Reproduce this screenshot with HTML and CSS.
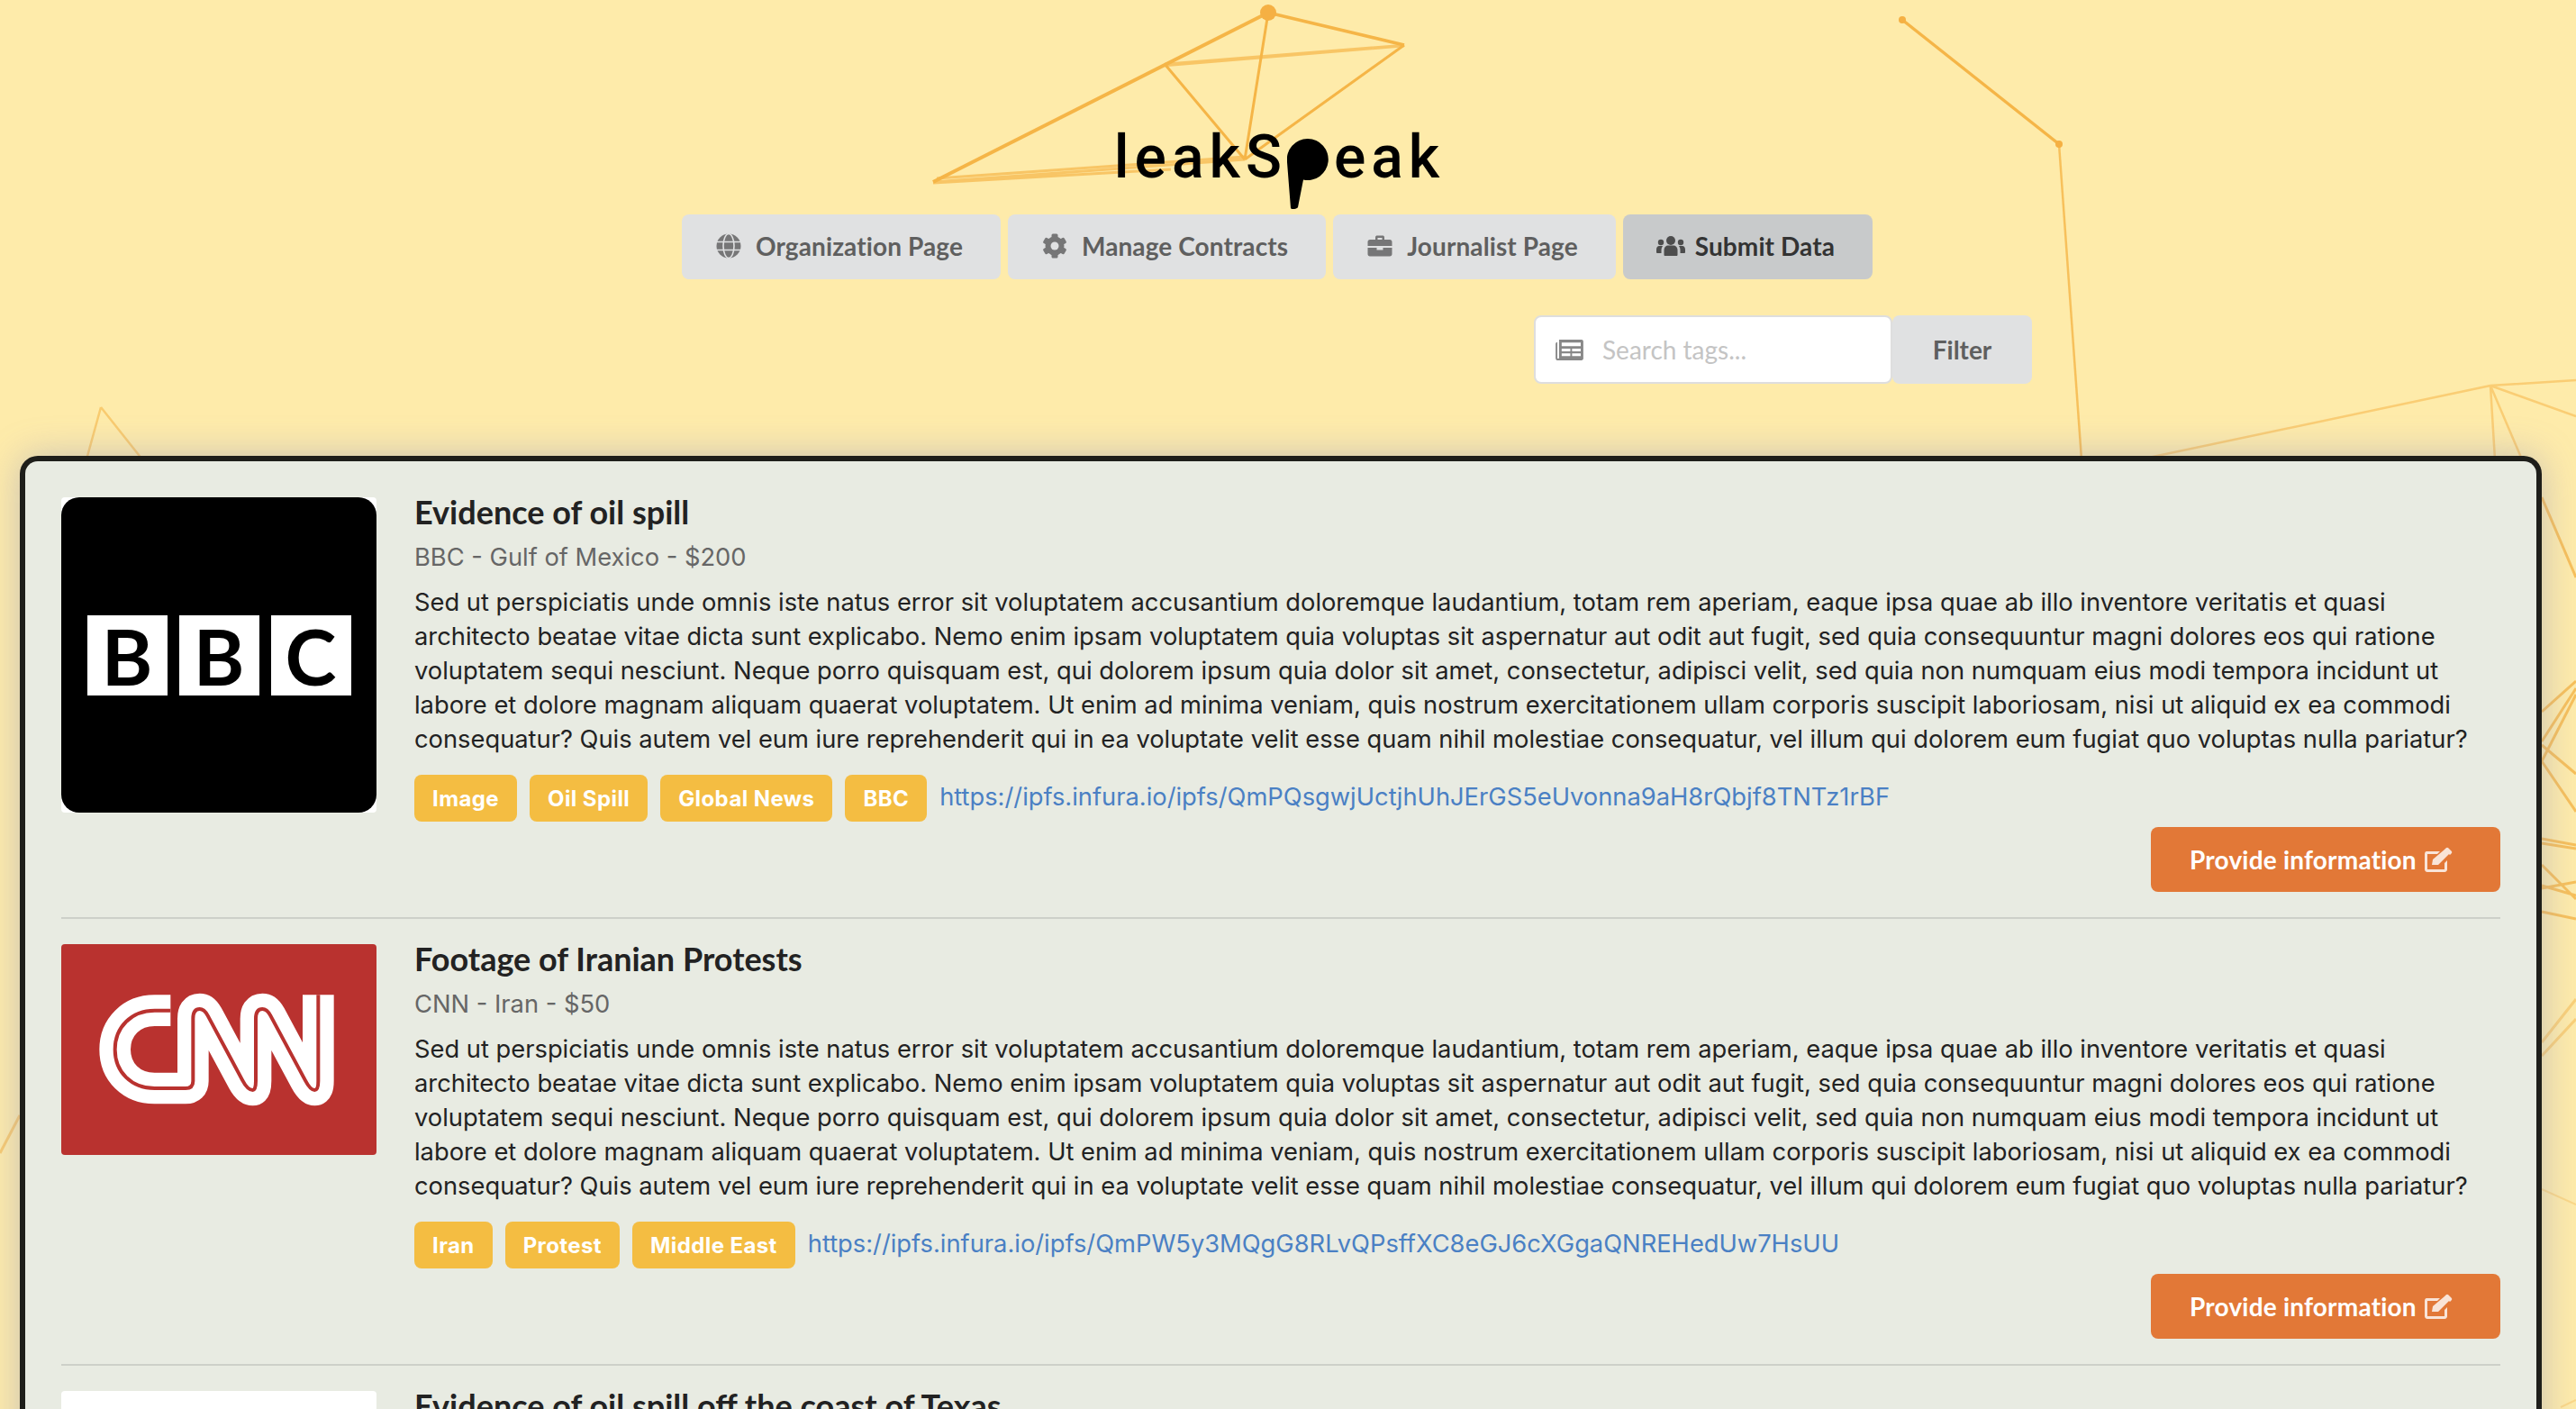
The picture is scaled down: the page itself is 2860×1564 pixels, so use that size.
FILE: index.html
```html
<!DOCTYPE html>
<html lang="en">
<head>
  <meta charset="UTF-8">
  <meta name="viewport" content="width=device-width, initial-scale=1.0">
  <title>leakSpeak - Submit Data</title>
  <link rel="stylesheet" href="styles.css">
</head>
<body>
  <!-- network lines behind the page -->
  <svg class="backdrop" viewBox="0 0 2860 1564">
    <g fill="none" stroke="#f5b547">
      <path stroke-width="4" d="M1408 14L1036 202"/>
      <path stroke-width="3.5" d="M1408 14L1559 50"/>
      <path stroke-width="2.5" opacity=".7" d="M1293 71L1559 50M1293 73L1559 51"/>
      <path stroke-width="3" d="M1293 71L1382 177M1408 14L1382 177M1559 50L1382 177"/>
      <path stroke-width="3" opacity=".7" d="M1036 202L1382 177M1040 198L1382 174M1036 203L1300 188"/>
      <path stroke-width="3.5" d="M2112 22L2286 160"/>
      <path stroke-width="2.5" opacity=".8" d="M2286 160L2311 510"/>
      <path stroke-width="2.5" opacity=".55" d="M2765 428L2376 510M2765 428L2860 422M2765 428L2800 510M2765 428L2770 510M2765 428L2860 462"/>
      <path stroke-width="2.5" opacity=".6" d="M112 452L96 510M112 452L158 510"/>
      <path stroke-width="3" opacity=".6" d="M0 1280L22 1238"/>
      <path stroke-width="3" opacity=".8" d="M2822 552L2860 641M2822 790L2860 756M2822 823L2860 764M2822 845L2860 771M2822 827L2860 859M2822 845L2860 901M2822 931L2860 938M2822 936L2860 942M2822 960L2860 998M2822 986L2860 979M2822 983L2860 994M2822 1012L2860 1020"/>
      <path stroke-width="3" opacity=".5" d="M2822 1157L2860 1109M2822 1172L2860 1131"/>
      <path stroke-width="2" opacity=".35" d="M2822 1320L2860 1337M2843 1562L2860 1554"/>
    </g>
    <circle cx="1408" cy="14" r="9" fill="#f5b043"/>
    <circle cx="2112" cy="22" r="4" fill="#f5b043"/>
    <circle cx="2286" cy="160" r="4" fill="#f5b043"/>
  </svg>

  <div class="page">
    <header class="masthead">
      <div class="logo">
        <span>leakS</span>
        <svg class="logo-pin" viewBox="0 0 46 78"><path d="M23 0a23 23 0 1 1-5 45.500L12 76c-1 2-7 3-8 1L0 26A23 23 0 0 1 23 0z"/></svg>
        <span>eak</span>
      </div>
      <nav class="tabs">
        <a class="tab" href="#">
          <svg class="icon" viewBox="0 0 28 28"><circle cx="14" cy="14" r="13.5"/><g fill="none" stroke="#e0e1e2" stroke-width="1.6"><path d="M1 9.500h26M1 18.500h26"/><ellipse cx="14" cy="14" rx="6" ry="13.500"/></g></svg>
          Organization Page
        </a>
        <a class="tab" href="#">
          <svg class="icon" viewBox="0 0 28 28"><circle cx="14" cy="14" r="10.500"/><g><rect x="10.500" y="0.500" width="7" height="27" rx="1.500"/><rect x="10.500" y="0.500" width="7" height="27" rx="1.500" transform="rotate(60 14 14)"/><rect x="10.500" y="0.500" width="7" height="27" rx="1.500" transform="rotate(120 14 14)"/></g><circle cx="14" cy="14" r="4.500" fill="#e0e1e2"/></svg>
          Manage Contracts
        </a>
        <a class="tab" href="#">
          <svg class="icon" viewBox="0 0 28 28"><path d="M9 7V4.500C9 3 10 2.500 11 2.500h6c1 0 2 .5 2 2V7h6c1.500 0 2.500 1 2.500 2.500V14h-27V9.500C.5 8 1.500 7 3 7zM11.500 5v2h5V5zM.5 16h10v2.500h7V16h10v7c0 1.500-1 2.500-2.500 2.500H3C1.500 25.500.5 24.500.5 23z"/></svg>
          Journalist Page
        </a>
        <a class="tab is-active" href="#">
          <svg class="icon" viewBox="0 0 32 28"><circle cx="16" cy="8" r="5"/><path d="M8.500 24v-5c0-4 2.500-5.500 4.500-5.500h6c2 0 4.500 1.500 4.500 5.500v5c0 .5-.5 1-1 1h-13c-.5 0-1-.5-1-1z"/><circle cx="5" cy="10" r="3.200"/><circle cx="27" cy="10" r="3.200"/><path d="M0 21v-3c0-2.500 1.500-4 3-4h4c-1 1.500-1.500 3-1.500 5v3H1c-.5 0-1-.5-1-1zM32 21v-3c0-2.500-1.500-4-3-4h-4c1 1.500 1.500 3 1.500 5v3H31c.5 0 1-.5 1-1z"/></svg>
          Submit Data
        </a>
      </nav>
      <div class="search-row">
        <div class="search">
          <svg class="search-icon" viewBox="0 0 32 26"><path d="M4 1h26c1 0 2 1 2 2v20c0 1-1 2-2 2H3c-2 0-3-1-3-3V6c0-1 1-2 2-2v18c0 .5.500 1 1 1s1-.5 1-1zm3 3.500v4h22v-4zm0 7v3h10v-3zm12 0v3h10v-3zM7 17v3h10v-3zm12 0v3h10v-3z" fill-rule="evenodd"/></svg>
          <input class="search-input" type="text" placeholder="Search tags...">
        </div>
        <button class="filter-btn">Filter</button>
      </div>
    </header>

    <main class="panel">
      <article class="item">
        <div class="thumb thumb-bbc">
          <div class="bbc-plate">
            <div class="bbc-mark"><span>B</span><span>B</span><span>C</span></div>
          </div>
        </div>
        <div class="item-body">
          <h3 class="item-title">Evidence of oil spill</h3>
          <div class="item-meta">BBC - Gulf of Mexico - $200</div>
          <p class="item-text">Sed ut perspiciatis unde omnis iste natus error sit voluptatem accusantium doloremque laudantium, totam rem aperiam, eaque ipsa quae ab illo inventore veritatis et quasi architecto beatae vitae dicta sunt explicabo. Nemo enim ipsam voluptatem quia voluptas sit aspernatur aut odit aut fugit, sed quia consequuntur magni dolores eos qui ratione voluptatem sequi nesciunt. Neque porro quisquam est, qui dolorem ipsum quia dolor sit amet, consectetur, adipisci velit, sed quia non numquam eius modi tempora incidunt ut labore et dolore magnam aliquam quaerat voluptatem. Ut enim ad minima veniam, quis nostrum exercitationem ullam corporis suscipit laboriosam, nisi ut aliquid ex ea commodi consequatur? Quis autem vel eum iure reprehenderit qui in ea voluptate velit esse quam nihil molestiae consequatur, vel illum qui dolorem eum fugiat quo voluptas nulla pariatur?</p>
          <div class="tag-row">
            <span class="tag">Image</span>
            <span class="tag">Oil Spill</span>
            <span class="tag">Global News</span>
            <span class="tag">BBC</span>
            <a class="item-link" href="#">https://ipfs.infura.io/ipfs/QmPQsgwjUctjhUhJErGS5eUvonna9aH8rQbjf8TNTz1rBF</a>
          </div>
          <div class="item-actions">
            <button class="provide-btn">Provide information
              <svg class="edit-icon" viewBox="0 0 32 28"><path d="M3 5h15l-3 3H4v17h19v-7l3-3v10c0 1.500-1 3-3 3H4c-2 0-3-1.500-3-3V8c0-2 1-3 2-3z"/><path d="M9 20l1-6L23 3l5 5-12 12zM24.500 1.500c1-1 2-1 3 0l3 3c1 1 1 2 0 3l-1.500 1.500-6-6z"/></svg>
            </button>
          </div>
        </div>
      </article>

      <article class="item">
        <div class="thumb thumb-cnn">
          <svg class="cnn-mark" viewBox="24 24 1050 702">
            <g fill="none" stroke-linejoin="round">
              <path stroke="#fff" stroke-width="104" d="M388 245H335C258 245 203 300 203 375S258 504 335 504H438Q463 504 463 480V272Q463 240 485 240Q500 240 512 262L628 478Q645 510 662 510Q672 510 672 480V272Q672 240 694 240Q709 240 721 262L837 478Q854 510 868 510Q880 510 880 480V193"/>
              <path stroke="#b9322f" stroke-width="12" d="M388 245H335C258 245 203 300 203 375S258 504 335 504H438Q463 504 463 480V272Q463 240 485 240Q500 240 512 262L628 478Q645 510 662 510Q672 510 672 480V272Q672 240 694 240Q709 240 721 262L837 478Q854 510 868 510Q880 510 880 480V193"/>
            </g>
          </svg>
        </div>
        <div class="item-body">
          <h3 class="item-title">Footage of Iranian Protests</h3>
          <div class="item-meta">CNN - Iran - $50</div>
          <p class="item-text">Sed ut perspiciatis unde omnis iste natus error sit voluptatem accusantium doloremque laudantium, totam rem aperiam, eaque ipsa quae ab illo inventore veritatis et quasi architecto beatae vitae dicta sunt explicabo. Nemo enim ipsam voluptatem quia voluptas sit aspernatur aut odit aut fugit, sed quia consequuntur magni dolores eos qui ratione voluptatem sequi nesciunt. Neque porro quisquam est, qui dolorem ipsum quia dolor sit amet, consectetur, adipisci velit, sed quia non numquam eius modi tempora incidunt ut labore et dolore magnam aliquam quaerat voluptatem. Ut enim ad minima veniam, quis nostrum exercitationem ullam corporis suscipit laboriosam, nisi ut aliquid ex ea commodi consequatur? Quis autem vel eum iure reprehenderit qui in ea voluptate velit esse quam nihil molestiae consequatur, vel illum qui dolorem eum fugiat quo voluptas nulla pariatur?</p>
          <div class="tag-row">
            <span class="tag">Iran</span>
            <span class="tag">Protest</span>
            <span class="tag">Middle East</span>
            <a class="item-link" href="#">https://ipfs.infura.io/ipfs/QmPW5y3MQgG8RLvQPsffXC8eGJ6cXGgaQNREHedUw7HsUU</a>
          </div>
          <div class="item-actions">
            <button class="provide-btn">Provide information
              <svg class="edit-icon" viewBox="0 0 32 28"><path d="M3 5h15l-3 3H4v17h19v-7l3-3v10c0 1.500-1 3-3 3H4c-2 0-3-1.500-3-3V8c0-2 1-3 2-3z"/><path d="M9 20l1-6L23 3l5 5-12 12zM24.500 1.500c1-1 2-1 3 0l3 3c1 1 1 2 0 3l-1.500 1.500-6-6z"/></svg>
            </button>
          </div>
        </div>
      </article>

      <article class="item">
        <div class="thumb thumb-blank"></div>
        <div class="item-body">
          <h3 class="item-title">Evidence of oil spill off the coast of Texas</h3>
        </div>
      </article>
    </main>
  </div>
</body>
</html>
```

FILE: styles.css
```css
html, body {
  height: 100%;
  overflow: hidden;
}
body {
  font-family: Inter, 'Noto Sans', sans-serif;
  font-size: 27.3px;
  background-color: #feebaa;
  color: #222;
  margin: 0;
  padding: 0;
  position: relative;
}
.backdrop {
  position: absolute;
  top: 0;
  left: 0;
  width: 2860px;
  height: 1564px;
}
.page {
  position: relative;
  width: 2844px;
}

/* header */
.masthead {
  display: flex;
  flex-direction: column;
  align-items: center;
  height: 506px;
}
.logo {
  display: flex;
  align-items: flex-start;
  height: 238px;
  margin-right: 3px;
  padding-top: 130px;
  box-sizing: border-box;
  font-family: Roboto, sans-serif;
  font-weight: 500;
  font-size: 66px;
  line-height: 90px;
  letter-spacing: 6px;
  color: #000;
}
.logo-pin {
  width: 46px;
  height: 78px;
  margin: 24px 6px 0 0;
}
.tabs {
  display: flex;
  gap: 8px;
  margin-right: 8px;
}
.tab {
  display: flex;
  align-items: center;
  gap: 16px;
  height: 72px;
  padding: 0 42px 2px 38px;
  box-sizing: border-box;
  border-radius: 8px;
  background: #e0e1e2;
  color: #5f5f5f;
  font-family: Lato, sans-serif;
  font-weight: 700;
  font-size: 28px;
  letter-spacing: 0.1px;
  text-decoration: none;
  white-space: nowrap;
}
.tab.is-active {
  gap: 10px;
  padding-left: 36px;
  background: #c8cacb;
  color: #333;
}
.icon {
  width: 28px;
  height: 28px;
  fill: #767677;
}
.tab.is-active .icon {
  width: 34px;
  fill: #4d4d4d;
}
.search-row {
  display: flex;
  align-self: flex-end;
  margin: 40px 588px 0 0;
  height: 76px;
}
.search {
  display: flex;
  align-items: center;
  width: 398px;
  box-sizing: border-box;
  background: #fff;
  border: 2px solid #dedede;
  border-radius: 8px;
  padding-left: 22px;
}
.search-icon {
  width: 31px;
  height: 25px;
  fill: #888;
  flex: none;
}
.search-input {
  border: 0;
  outline: 0;
  width: 300px;
  margin-left: 21px;
  padding: 0;
  font-family: Lato, sans-serif;
  font-size: 28px;
}
.search-input::placeholder {
  color: #c4c4c4;
}
.filter-btn {
  width: 155px;
  border: 0;
  border-radius: 8px;
  background: #e0e1e2;
  color: #5f5f5f;
  font-family: Lato, sans-serif;
  font-weight: 700;
  font-size: 28px;
}

/* list panel */
.panel {
  margin-left: 22px;
  width: 2800px;
  box-sizing: border-box;
  background: #e8ebe2;
  border: 6px solid #1e1e1a;
  border-bottom: 0;
  border-radius: 20px 20px 0 0;
  padding: 40px 40px 0;
  box-shadow: 0 0 40px rgba(120, 130, 200, 0.4);
}
.item {
  display: flex;
  gap: 42px;
  padding-bottom: 28px;
  margin-bottom: 28px;
  border-bottom: 2px solid #cdd0c9;
}
.item:last-child {
  border-bottom: 0;
}
.thumb {
  flex: none;
  width: 350px;
  border-radius: 4px;
}
.thumb-bbc {
  height: 350px;
  background: #fff;
}
.bbc-plate {
  height: 100%;
  background: #000;
  border-radius: 20px;
  display: flex;
  align-items: center;
  justify-content: center;
}
.bbc-mark {
  display: flex;
  gap: 13px;
}
.bbc-mark span {
  display: block;
  width: 89px;
  height: 89px;
  background: #fff;
  color: #000;
  font-family: Lato, sans-serif;
  font-weight: 700;
  font-size: 86px;
  line-height: 89px;
  text-align: center;
}
.thumb-cnn {
  height: 234px;
  background: #b9322f;
}
.cnn-mark {
  display: block;
  width: 350px;
  height: 234px;
}
.thumb-blank {
  height: 234px;
  background: #fff;
}
.item-body {
  flex: 1;
  min-width: 0;
  margin-top: -4px;
}
.item-title {
  margin: 0;
  font-family: Lato, sans-serif;
  font-weight: 700;
  font-size: 36px;
  line-height: 40px;
  color: #222;
}
.item-meta {
  margin-top: 11px;
  line-height: 40px;
  color: #666;
}
.item-text {
  margin: 11px 0 0;
  line-height: 38px;
  color: #222;
}
.tag-row {
  display: flex;
  align-items: center;
  gap: 14px;
  margin-top: 20px;
  height: 52px;
}
.tag {
  display: flex;
  align-items: center;
  height: 52px;
  padding: 0 20px;
  box-sizing: border-box;
  border-radius: 8px;
  background: #f4bd42;
  color: #fff;
  font-size: 24px;
  font-weight: 700;
  letter-spacing: 0.4px;
  white-space: nowrap;
}
.item-link {
  margin-bottom: 4px;
  color: #4a80c4;
  text-decoration: none;
  white-space: nowrap;
}
.item-actions {
  display: flex;
  justify-content: flex-end;
  margin-top: 6px;
}
.provide-btn {
  display: flex;
  align-items: center;
  gap: 8px;
  width: 388px;
  height: 72px;
  padding: 0 0 0 43px;
  border: 0;
  border-radius: 8px;
  background: #e27837;
  color: #fff;
  font-family: Lato, sans-serif;
  font-weight: 700;
  font-size: 28px;
  letter-spacing: 0.2px;
}
.edit-icon {
  width: 32px;
  height: 28px;
  fill: #fff;
  opacity: 0.8;
}
```
